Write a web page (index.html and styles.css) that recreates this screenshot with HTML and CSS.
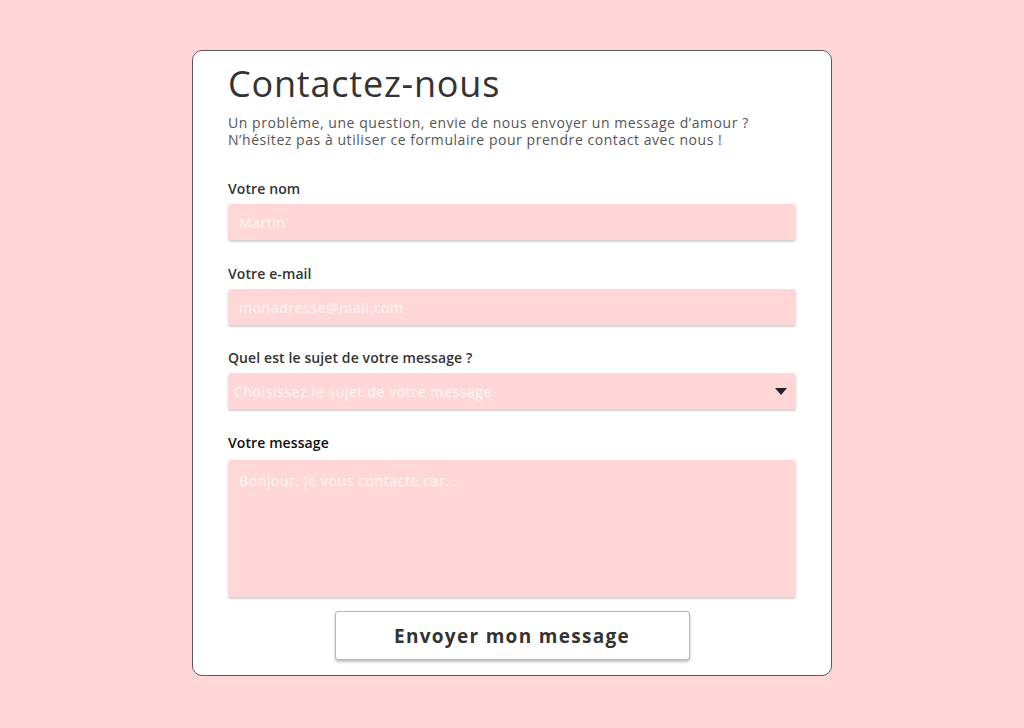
FILE: index.html
```html
<!DOCTYPE html>
<html lang="fr">
<head>
<meta charset="utf-8">
<title>Contactez-nous</title>
<link rel="stylesheet" href="styles.css">
</head>
<body>
<main class="page">
  <form class="card">
    <h1 class="title">Contactez-nous</h1>
    <p class="intro">Un problème, une question, envie de nous envoyer un message d’amour ?<br>N’hésitez pas à utiliser ce formulaire pour prendre contact avec nous !</p>
    <div class="fields">
      <div class="field">
        <label class="label" for="nom">Votre nom</label>
        <input class="control" id="nom" type="text" placeholder="Martin">
      </div>
      <div class="field field-mail">
        <label class="label" for="mail">Votre e-mail</label>
        <input class="control" id="mail" type="email" placeholder="monadresse@mail.com">
      </div>
      <div class="field">
        <label class="label" for="sujet">Quel est le sujet de votre message ?</label>
        <div class="select-wrap">
          <select class="control select" id="sujet">
            <option selected disabled>Choisissez le sujet de votre message</option>
          </select>
        </div>
      </div>
      <div class="field field-msg">
        <label class="label label-dark" for="msg">Votre message</label>
        <textarea class="control area" id="msg" placeholder="Bonjour, je vous contacte car..."></textarea>
      </div>
    </div>
    <div class="actions">
      <button class="send" type="button">Envoyer mon message</button>
    </div>
  </form>
</main>
</body>
</html>
```

FILE: styles.css
```css
* { box-sizing: border-box; }
html, body { margin: 0; padding: 0; }
body {
  background: #ffd7d6;
  font-family: "Open Sans", "DejaVu Sans", sans-serif;
  color: #333;
  min-height: 728px;
}
.page {
  display: flex;
  justify-content: center;
  padding-top: 50px;
}
.card {
  width: 640px;
  height: 626px;
  background: #fff;
  border: 1px solid #5a5a5a;
  border-radius: 10px;
  padding: 11px 35px 0 35px;
  display: flex;
  flex-direction: column;
}
.title {
  margin: 0;
  font-weight: 400;
  font-size: 36px;
  line-height: 44px;
  color: #333;
  letter-spacing: 0.8px;
}
.intro {
  margin: 8px 0 0 0;
  font-size: 14px;
  line-height: 17px;
  color: #555;
  letter-spacing: 0.55px;
}
.fields {
  margin-top: 32px;
  display: flex;
  flex-direction: column;
  gap: 24px;
}
.field {
  display: flex;
  flex-direction: column;
}
.field-mail { margin-top: 1px; }
.field-msg { margin-top: 1px; }
.label {
  font-size: 14px;
  line-height: 18px;
  font-weight: 600;
  color: #333;
  margin-bottom: 6px;
  letter-spacing: 0.1px;
}
.label-dark { color: #111; margin-bottom: 8px; }
.control {
  width: 568px;
  height: 36px;
  border: none;
  border-radius: 3px;
  background: #ffd7d6;
  box-shadow: 0 2px 2px rgba(0,0,0,0.18);
  font-family: inherit;
  font-size: 14px;
  letter-spacing: 0.6px;
  padding: 0 11px;
  color: #fff;
  outline: none;
}
.control::placeholder { color: #fff; opacity: 0.85; }
.select-wrap { position: relative; width: 568px; }
.select {
  -webkit-appearance: none;
  appearance: none;
  padding: 0 6px;
  color: rgba(255,255,255,0.85);
}
.select-wrap::after {
  content: "";
  position: absolute;
  right: 9px;
  top: 15px;
  border-left: 6px solid transparent;
  border-right: 6px solid transparent;
  border-top: 7px solid #222;
}
.area {
  height: 137px;
  padding: 11px;
  resize: none;
}
.actions {
  display: flex;
  justify-content: center;
  margin-top: 14px;
}
.send {
  width: 355px;
  height: 49px;
  background: #fff;
  border: 1px solid #b5b5b5;
  border-radius: 3px;
  box-shadow: 0 2px 3px rgba(0,0,0,0.25);
  font-family: inherit;
  font-weight: 700;
  font-size: 19px;
  color: #333;
  letter-spacing: 1.3px;
  cursor: pointer;
}
```
